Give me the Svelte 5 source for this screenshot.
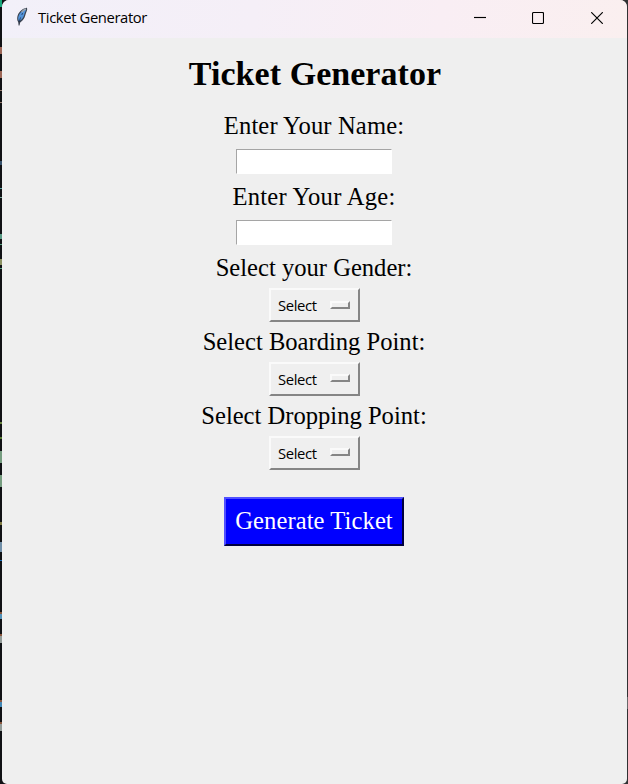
<script>
  const entries = [
    { label: 'Enter Your Name:', spacing: 0.13 },
    { label: 'Enter Your Age:', spacing: 0.27 }
  ];
  const menus = ['Select your Gender:', 'Select Boarding Point:', 'Select Dropping Point:'];
  // slivers of the editor behind the window: [top, height, colour]
  const slivers = [
    [0, 7, '#18a67c'], [47, 7, '#9c6656'], [71, 7, '#9c6656'], [90, 1, '#94796d'],
    [102, 1, '#94796d'], [161, 4, '#35506a'], [188, 1, '#58a0a0'], [197, 1, '#78a698'],
    [234, 5, '#579984'], [244, 1, '#58a080'], [259, 6, '#8b9262'], [268, 1, '#58a080'],
    [422, 2, '#698440'], [437, 2, '#547b30'], [451, 12, '#769d80'], [475, 12, '#769d80'],
    [522, 3, '#807b43'], [542, 10, '#708fa8'], [560, 1, '#1670bd'], [612, 2, '#8a553c'],
    [614, 5, '#5291b8'], [634, 2, '#8a553c'], [636, 7, '#929b98'], [700, 2, '#8a553c'],
    [702, 5, '#4287b5'], [722, 2, '#8a553c'], [724, 7, '#929b98']
  ];
</script>

<div class="desktop">
  {#each slivers as [top, height, color]}
    <i class="sliver" style="top:{top}px;height:{height}px;background:{color}"></i>
  {/each}
  <i class="sliver right"></i>
  <div class="window">
    <header>
      <svg class="feather" width="14" height="20" viewBox="0 0 14 20">
        <path d="M12 0.8C8.5 1 4.5 4 2.8 8C1.8 10.8 2 13.5 3.2 15L3.6 18.5L4.5 18.5L5.2 15.4C8.5 13.5 9.5 11 10.4 8C11.2 5 12.8 3 12 .8Z" fill="#3a424f" />
        <path d="M11 2C7 3.4 4.4 6.4 3.5 9.2C2.9 11.3 3.1 13 4.2 14C7.4 12.6 8.8 9.7 9.5 6.8C10 4.8 11.2 3.6 11 2Z" fill="#5293da" />
        <path d="M11 2C9.3 2.5 7.7 3.7 6.7 5.1" fill="none" stroke="#9ca7b2" stroke-width="1.4" />
        <path d="M7.6 6L6.8 8M5.6 10.4L4 15.3" fill="none" stroke="#152a48" stroke-width=".7" />
      </svg>
      <span class="caption">Ticket Generator</span>
      <div class="controls">
        <svg width="12" height="12" viewBox="0 0 12 12"><path d="M0 5.5H12" /></svg>
        <svg width="12" height="12" viewBox="0 0 12 12"><rect x=".5" y=".5" width="11" height="11" rx="1" /></svg>
        <svg class="close" width="12" height="12" viewBox="0 0 12 12"><path d="M.2 .2L11.8 11.8M11.8 .2L.2 11.8" /></svg>
      </div>
    </header>
    <main>
      <h1>Ticket Generator</h1>
      {#each entries as e}
        <div class="label" style="letter-spacing:{e.spacing}px">{e.label}</div>
        <input class="entry" type="text" aria-label={e.label} />
      {/each}
      {#each menus as m}
        <div class="label">{m}</div>
        <button class="menu"><span>Select</span><i class="indicator"></i></button>
      {/each}
      <button class="generate">Generate Ticket</button>
    </main>
  </div>
</div>

<style>
  .desktop {
    position: relative;
    box-sizing: border-box;
    width: 628px;
    height: 784px;
    padding: 0 1px 0 2px;
    overflow: hidden;
    background: linear-gradient(90deg, #101114 0 50%, #303133 50%);
  }
  .sliver { position: absolute; left: 0; width: 2px; }
  .sliver.right { left: 627px; top: 697px; width: 1px; height: 12px; background: #68686a; }
  .window {
    position: relative;
    height: 784px;
    overflow: hidden;
    border-radius: 7px 7px 5px 5px;
    background: #efefef;
  }
  header {
    display: flex;
    align-items: center;
    height: 38px;
    box-sizing: border-box;
    padding: 0 24px 2px 13px;
    background: linear-gradient(100deg, #f2f0f9 0%, #f5eff7 40%, #f9eef4 70%, #faefef 100%);
  }
  .feather { flex: none; margin-top: -3px; }
  .caption {
    margin: -3px 0 0 9px;
    color: #000;
    font: 14.8px/20px "Open Sans", "Noto Sans", sans-serif;
    letter-spacing: -0.38px;
    white-space: nowrap;
  }
  .controls { display: flex; gap: 46px; margin-left: auto; }
  .controls svg { fill: none; stroke: #000; stroke-width: 1.15; }
  .controls .close { margin-left: 1px; }
  main {
    display: flex;
    flex-direction: column;
    align-items: center;
    padding-right: 1px;
    font-family: "Liberation Serif", "Times New Roman", serif;
    color: #000;
  }
  h1 { margin: 16px 0 0 2px; font-size: 34px; line-height: 40px; font-weight: bold; letter-spacing: 0.05px; white-space: nowrap; }
  .label { height: 28px; margin-top: 18px; font-size: 24.6px; line-height: 28px; white-space: nowrap; }
  .entry + .label { margin-top: 9px; }
  .entry {
    width: 156px;
    height: 25px;
    box-sizing: border-box;
    margin: 9px 0 0;
    padding: 1px;
    border: 1px solid #fff;
    border-top-color: #a5a5a5;
    border-left-color: #a5a5a5;
    border-radius: 0;
    background: #fff;
    outline: none;
  }
  .menu {
    display: flex;
    align-items: center;
    justify-content: space-between;
    width: 91px;
    height: 34px;
    box-sizing: border-box;
    margin: 6px 0 0 1px;
    padding: 0 8px 0 7px;
    border: 2px solid;
    border-color: #fafafa #858585 #858585 #fafafa;
    border-radius: 0;
    background: #efefef;
    color: #000;
    font: 14.8px/20px "Open Sans", "Noto Sans", sans-serif;
    letter-spacing: -0.35px;
  }
  .indicator {
    width: 20px;
    height: 8px;
    margin-top: -1px;
    box-sizing: border-box;
    border: 2px solid;
    border-color: #fafafa #858585 #858585 #fafafa;
  }
  .menu + .label { margin-top: 5.75px; }
  .generate {
    width: 180px;
    height: 49px;
    box-sizing: border-box;
    margin: 27.5px 0 0;
    padding: 0 0 2px;
    border: 2px solid;
    border-color: #5050ff #000040 #000040 #5050ff;
    border-radius: 0;
    background: #0000ff;
    color: #fff;
    font: 24.6px/28px "Liberation Serif", "Times New Roman", serif;
    letter-spacing: 0.08px;
    white-space: nowrap;
  }
</style>
